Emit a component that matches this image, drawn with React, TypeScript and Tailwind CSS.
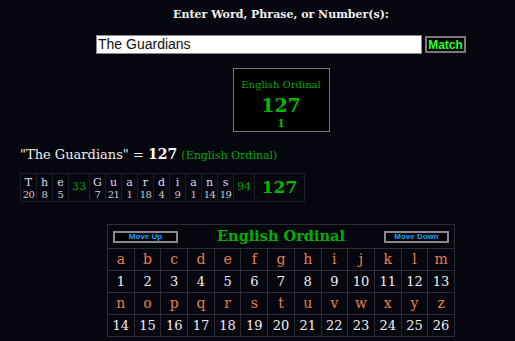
import React from 'react';

const word = [
  { ch: 'T', v: 20 }, { ch: 'h', v: 8 }, { ch: 'e', v: 5 }, { sum: 33 },
  { ch: 'G', v: 7 }, { ch: 'u', v: 21 }, { ch: 'a', v: 1 }, { ch: 'r', v: 18 },
  { ch: 'd', v: 4 }, { ch: 'i', v: 9 }, { ch: 'a', v: 1 }, { ch: 'n', v: 14 },
  { ch: 's', v: 19 }, { sum: 94 },
];

const alpha = 'abcdefghijklmnopqrstuvwxyz'.split('');

const serif = "font-['DejaVu_Serif',serif]";

const App = () => {
  const rowA = alpha.slice(0, 13);
  const rowB = alpha.slice(13);

  return (
    <div className={`min-h-[341px] bg-[#06060f] text-white ${serif}`}>
      {/* centred top part */}
      <div className="flex flex-col items-center pl-[47px] pt-[7px]">
        <p className="text-[11px] font-bold leading-[15px] text-[#f0f0f0]">Enter Word, Phrase, or Number(s):</p>
        <div className="mt-[13px] flex items-center gap-[3px]">
          <div className="flex h-[19px] w-[326px] items-center border border-[#8a8a8a] bg-white px-[1px] font-['Liberation_Sans',sans-serif] text-[14px] text-[#111]">
            The Guardians
          </div>
          <button className="flex h-[17px] w-[41px] items-center justify-center border-2 border-[#7a7a7a] bg-black font-['Liberation_Sans',sans-serif] text-[12px] font-bold text-[#2bff2b]">
            Match
          </button>
        </div>
        <div className="mt-[14px] flex h-[64px] w-[97px] flex-col items-center border border-[#777] bg-black pt-[9px]">
          <span className="text-[10px] leading-[13px] text-[#00a800]">English Ordinal</span>
          <span className="mt-[3px] text-[19px] font-bold leading-[22px] text-[#00b800]">127</span>
          <span className="mt-[1px] text-[11px] font-bold leading-[13px] text-[#00b800]">1</span>
        </div>
      </div>

      {/* result line */}
      <div className="mt-[13px] px-[20px]">
        <p className="text-[13px] leading-[18px] text-[#eee]">
          "The Guardians" = <span className="text-[14px] font-bold text-white">127</span>{' '}
          <span className="text-[11px] text-[#00a800]">(English Ordinal)</span>
        </p>
        <table className="mt-[8px] border-collapse">
          <tbody>
            <tr>
              {word.map((w, i) =>
                w.sum !== undefined ? (
                  <td key={i} rowSpan={2} className="border border-[#1e1e26] p-0 text-center align-middle">
                    <div className="w-[20px] text-[11px] text-[#00a000]">{w.sum}</div>
                  </td>
                ) : (
                  <td key={i} className="border-x border-t border-[#1e1e26] p-0 text-center align-bottom">
                    <div className="flex h-[15px] w-[15px] items-end justify-center text-[11px] leading-[13px] text-[#dde]">{w.ch}</div>
                  </td>
                )
              )}
              <td rowSpan={2} className="border border-[#1e1e26] p-0 text-center align-middle">
                <div className="w-[49px] text-[17px] font-bold text-[#00b800]">127</div>
              </td>
            </tr>
            <tr>
              {word
                .filter((w) => w.sum === undefined)
                .map((w, i) => (
                  <td key={i} className="border-x border-b border-[#1e1e26] p-0 text-center align-top">
                    <div className="h-[12px] text-[10px] leading-[12px] tracking-[-0.5px] text-[#ccc]">{w.v}</div>
                  </td>
                ))}
            </tr>
          </tbody>
        </table>
      </div>

      {/* cipher chart */}
      <div className="mt-[22px] flex justify-center pl-[47px]">
        <table className="w-[348px] border-collapse border border-[#3a3a44]">
          <tbody>
            <tr>
              <td colSpan={13} className="h-[24px] border border-[#2c2c34] p-0">
                <div className="flex items-center justify-between px-[5px]">
                  <button className="flex h-[12px] w-[65px] items-center justify-center border-2 border-[#8a8a8a] bg-black font-['Liberation_Sans',sans-serif] text-[8px] font-bold leading-none text-[#1aa3ff]">
                    Move Up
                  </button>
                  <span className="text-[14.5px] font-bold leading-none text-[#00b000]">English Ordinal</span>
                  <button className="flex h-[12px] w-[65px] items-center justify-center border-2 border-[#8a8a8a] bg-black font-['Liberation_Sans',sans-serif] text-[8px] font-bold leading-none text-[#1aa3ff]">
                    Move Down
                  </button>
                </div>
              </td>
            </tr>
            {[rowA, rowB].map((row, r) => (
              <React.Fragment key={r}>
                <tr>
                  {row.map((c) => (
                    <td key={c} className="h-[22px] w-[26.7px] border border-[#2c2c34] p-0 text-center text-[14px] text-[#e0804e]">
                      {c}
                    </td>
                  ))}
                </tr>
                <tr>
                  {row.map((c, i) => (
                    <td key={c} className="h-[22px] border border-[#2c2c34] p-0 text-center text-[13px] text-[#f0f0f0]">
                      {r * 13 + i + 1}
                    </td>
                  ))}
                </tr>
              </React.Fragment>
            ))}
          </tbody>
        </table>
      </div>
    </div>
  );
};

export default App;
